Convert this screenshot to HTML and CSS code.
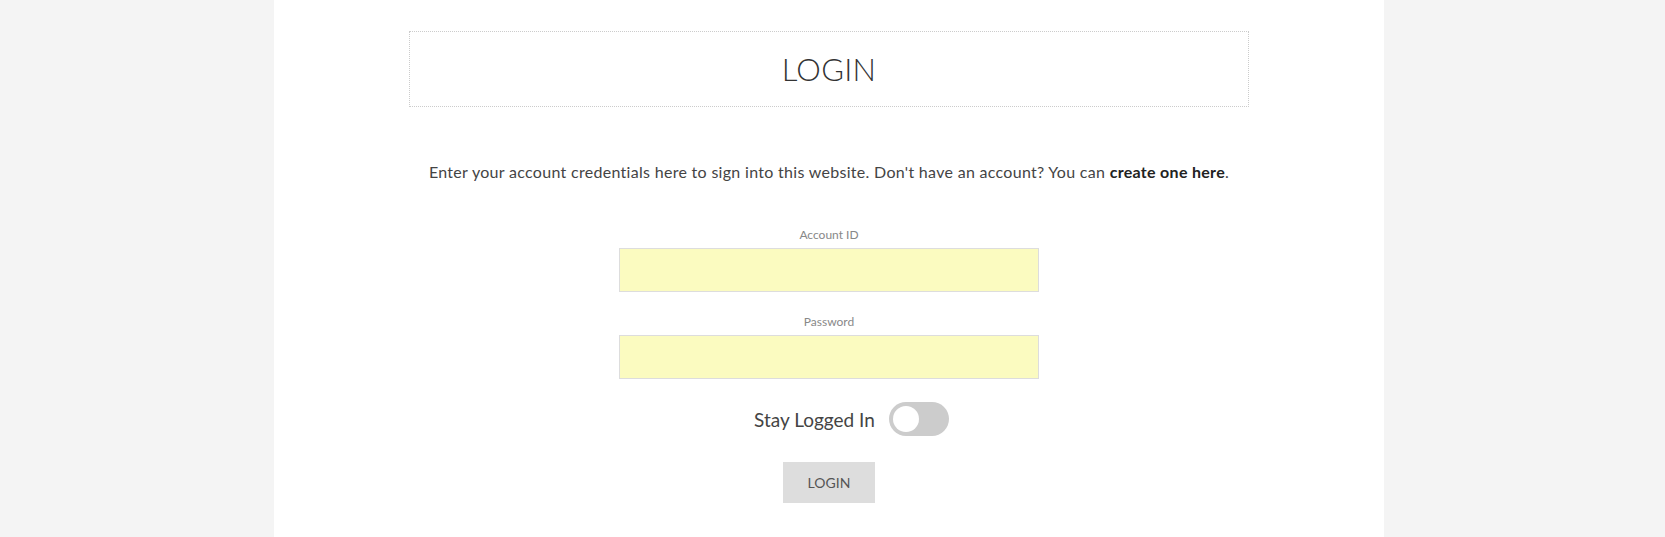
FILE: index.html
```html
<!DOCTYPE html>
<html lang="en">
<head>
<meta charset="utf-8">
<title>Login</title>
<link rel="stylesheet" href="styles.css">
</head>
<body>
<div class="shell">
  <main class="page">
    <div class="title-box"><h1 class="title">LOGIN</h1></div>
    <p class="intro">Enter your account credentials here to sign into this website. Don't have an account? You can <a class="link" href="#">create one here</a>.</p>
    <form class="form">
      <label class="field">
        <span class="label">Account ID</span>
        <input class="input" type="text">
      </label>
      <label class="field">
        <span class="label">Password</span>
        <input class="input" type="password">
      </label>
      <div class="stay">
        <span class="stay-text">Stay Logged In</span>
        <span class="toggle"><span class="knob"></span></span>
      </div>
      <button class="btn" type="button">LOGIN</button>
    </form>
  </main>
</div>
</body>
</html>
```

FILE: styles.css
```css
html, body {
  margin: 0;
  padding: 0;
  background: #f4f4f4;
}
.shell {
  display: flex;
  justify-content: center;
  padding-right: 7px;
}
.page {
  width: 1110px;
  min-height: 537px;
  background: #ffffff;
  padding-top: 31px;
  box-sizing: border-box;
  display: flex;
  flex-direction: column;
  align-items: center;
  font-family: Lato, "Noto Sans", sans-serif;
  color: #444;
}
.title-box {
  width: 840px;
  height: 76px;
  box-sizing: border-box;
  border: 1px dotted #cccccc;
  display: flex;
  align-items: center;
  justify-content: center;
}
.title {
  margin: 0;
  font-family: Lato, sans-serif;
  font-weight: 300;
  font-size: 31px;
  color: #333;
  letter-spacing: 0.3px;
}
.intro {
  margin: 53px 0 0 0;
  font-size: 16px;
  line-height: 24px;
  color: #444;
  letter-spacing: 0.3px;
}
.link {
  color: #222;
  font-weight: 700;
  text-decoration: none;
}
.form {
  margin-top: 43px;
  display: flex;
  flex-direction: column;
  align-items: center;
}
.field {
  display: flex;
  flex-direction: column;
  align-items: center;
  margin-bottom: 22px;
}
.label {
  font-size: 12px;
  line-height: 16px;
  color: #888;
  margin-bottom: 5px;
}
.input {
  width: 420px;
  height: 44px;
  box-sizing: border-box;
  background: #fbfbc0;
  border: 1px solid #dddddd;
  margin: 0;
  padding: 0 10px;
}
.stay {
  display: flex;
  align-items: center;
  gap: 14px;
  margin-top: 1px;
  margin-left: 45px;
}
.stay-text {
  font-size: 19px;
  color: #444;
}
.toggle {
  width: 60px;
  height: 34px;
  border-radius: 17px;
  background: #cccccc;
  display: flex;
  align-items: center;
  padding-left: 4px;
  box-sizing: border-box;
}
.knob {
  width: 26px;
  height: 26px;
  border-radius: 50%;
  background: #ffffff;
}
.btn {
  margin-top: 26px;
  width: 92px;
  height: 41px;
  background: #dddddd;
  border: none;
  font-family: Lato, sans-serif;
  font-size: 14px;
  color: #555;
  padding: 0;
}
```
